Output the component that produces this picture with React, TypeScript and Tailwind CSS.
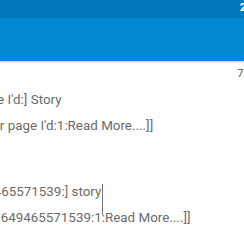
export default function App() {
  const line = "whitespace-nowrap text-[13.4px] leading-[16px] text-[#6b6b6b]";
  return (
    <div className="relative h-[244px] w-[244px] overflow-hidden bg-white font-['Roboto',sans-serif]">
      {/* status bar */}
      <div className="flex h-[18px] items-start justify-end bg-[#0277bd]">
        <span className="-mr-[2px] mt-[3px] text-[11px] font-bold leading-[10px] text-white">2</span>
      </div>
      {/* toolbar */}
      <div className="h-[43px] bg-[#0288d1] shadow-[0_1px_2px_rgba(0,0,0,0.25)]" />

      <div className="flex justify-end pt-[8px]">
        <span className="-mr-[2px] whitespace-nowrap text-[11px] leading-[10px] text-[#555]">7:</span>
      </div>

      <div className="mt-[13px] flex flex-col">
        <div className={`${line} -ml-[63px]`}>[Story page I'd:] Story</div>
        <div className={`${line} -ml-[37px] mt-[10px]`}>[[Cover page I'd:1:Read More....]]</div>
        <div className={`${line} -ml-[40px] mt-[50px]`}>
          [16494<span>65571539:] story</span>
          <span className="relative">
            <span className="absolute left-[1px] top-0 h-[31px] w-px bg-[#777]" />
          </span>
        </div>
        <div className={`${line} -ml-[14px] mt-[10px]`}>[[1649465571539:1:Read More....]]</div>
      </div>
    </div>
  );
}
